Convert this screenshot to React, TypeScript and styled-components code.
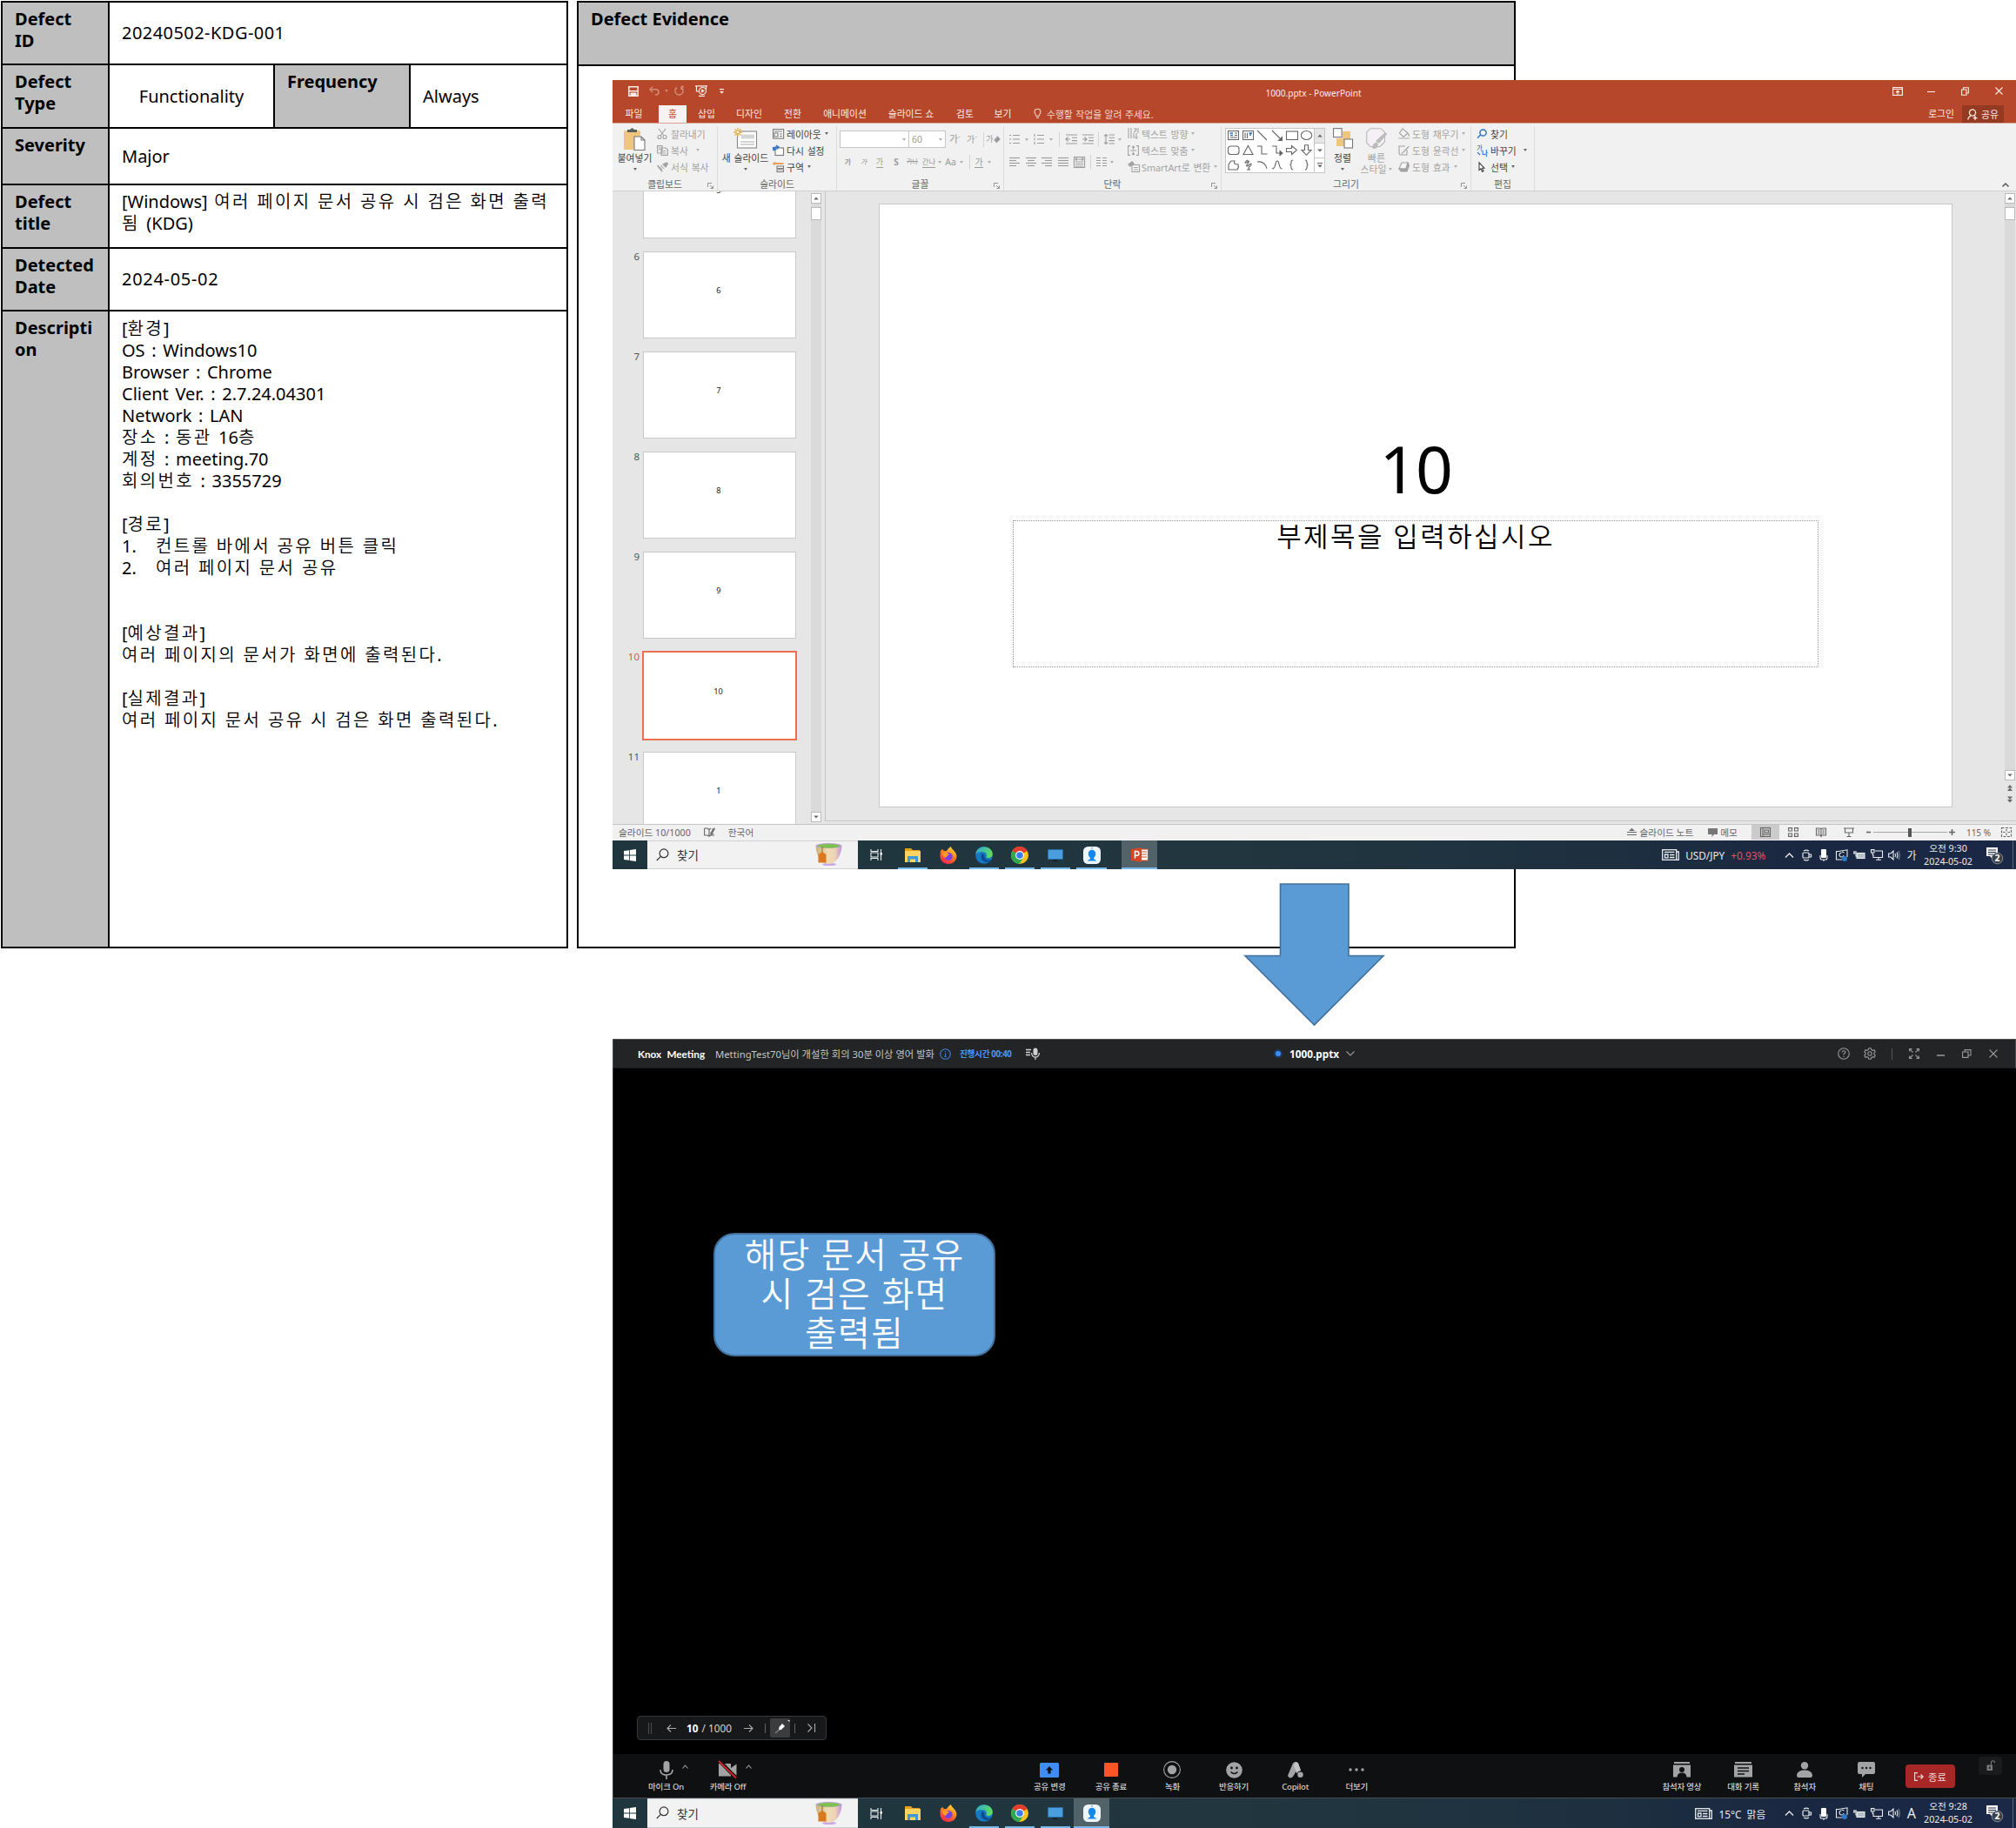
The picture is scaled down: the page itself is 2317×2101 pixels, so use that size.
import React from "react";
import styled, { createGlobalStyle, css } from "styled-components";

const Global = createGlobalStyle`
  * { box-sizing: border-box; }
  html, body { margin: 0; padding: 0; background: #fff; }
  body { font-family: "Noto Sans", "Noto Sans CJK KR", sans-serif; }
`;

/* ---------- shared pieces ---------- */

const Page = styled.div`
  position: relative;
  width: 2317px;
  height: 2101px;
  overflow: hidden;
  background: #fff;
  color: #000;
`;

const Svg = styled.svg<{ $w: number; $h: number }>`
  display: block;
  flex: none;
  width: ${(p) => p.$w}px;
  height: ${(p) => p.$h}px;
  overflow: visible;
`;

type IconProps = { w: number; h: number; children: React.ReactNode; stroke?: string; fill?: string; sw?: number };
const Icon = ({ w, h, children, stroke = "currentColor", fill = "none", sw = 1.1 }: IconProps) => (
  <Svg $w={w} $h={h} viewBox={`0 0 ${w} ${h}`} stroke={stroke} fill={fill} strokeWidth={sw}>
    {children}
  </Svg>
);

const Spot = styled.div<{ $w: number; $c?: string; $bg?: string }>`
  flex: none;
  width: ${(p) => p.$w}px;
  align-self: stretch;
  display: flex;
  align-items: center;
  justify-content: center;
  color: ${(p) => p.$c || "inherit"};
  background: ${(p) => p.$bg || "transparent"};
`;

const Gap = styled.div<{ $w: number }>`
  flex: none;
  width: ${(p) => p.$w}px;
`;

const Caret = styled.i<{ $c?: string }>`
  flex: none;
  width: 0;
  height: 0;
  border: 2.6px solid transparent;
  border-bottom: 0;
  border-top: 3px solid ${(p) => p.$c || "#666"};
`;

const Hangul = styled.span<{ $ls: number }>`
  letter-spacing: ${(p) => p.$ls}px;
  word-spacing: 0;
  font-weight: 350;
`;

/* Latin keeps its natural width, Hangul runs are spaced a little wider. */
const Mixed = ({ text, ls = 2.35 }: { text: string; ls?: number }) => (
  <>
    {text.split(/([가-힣][가-힣 ]*)/).map((part, i) =>
      i % 2 ? (
        <Hangul key={i} $ls={ls}>
          {part}
        </Hangul>
      ) : (
        part
      )
    )}
  </>
);

/* ---------- report tables ---------- */

const Tables = styled.div`
  display: flex;
  gap: 10px;
  padding: 1px 0 0 1px;
  font-size: 20px;
  line-height: 25px;
`;

const DefectTable = styled.div`
  display: grid;
  grid-template-columns: 121px 188px 154px 179px;
  grid-template-rows: 70px 71px 63px 71px 70px 730px;
  gap: 2px;
  padding: 2px;
  background: #000;
`;

const EvidenceTable = styled.div`
  display: grid;
  grid-template-columns: 1075px;
  grid-template-rows: 71px 1012px;
  gap: 2px;
  padding: 2px;
  background: #000;
`;

const HeadCell = styled.div`
  background: #bfbfbf;
  font-weight: 700;
  padding: 6px 0 0 14px;
`;

const Cell = styled.div<{ $span?: number; $top?: number; $center?: boolean; $ls?: number }>`
  background: #fff;
  grid-column: span ${(p) => p.$span || 1};
  display: flex;
  flex-direction: column;
  justify-content: ${(p) => (p.$top ? "flex-start" : "center")};
  align-items: ${(p) => (p.$center ? "center" : "flex-start")};
  padding: ${(p) => (p.$center ? "0" : p.$top ? `${p.$top}px 0 0 14px` : "0 0 1px 14px")};
  letter-spacing: ${(p) => p.$ls || 0}px;
`;

const Line = styled.div`
  height: 25px;
  white-space: pre;
  display: flex;
  word-spacing: 2.4px;
`;

const Bullet = styled.span`
  width: 39px;
`;

const env = [
  "[환경]", "OS : Windows10", "Browser : Chrome", "Client Ver. : 2.7.24.04301", "Network : LAN",
  "장소 : 동관 16층", "계정 : meeting.70", "회의번호 : 3355729", "", "[경로]",
];
const results = ["", "", "[예상결과]", "여러 페이지의 문서가 화면에 출력된다.", "", "[실제결과]", "여러 페이지 문서 공유 시 검은 화면 출력된다."];

const TextLine = ({ text }: { text: string }) => (
  <Line>
    <span>
      <Mixed text={text} />
    </span>
  </Line>
);

const Report = () => (
  <Tables>
    <DefectTable>
      <HeadCell>Defect<br />ID</HeadCell>
      <Cell $span={3} $ls={0.45}>20240502-KDG-001</Cell>
      <HeadCell>Defect<br />Type</HeadCell>
      <Cell $center>Functionality</Cell>
      <HeadCell>Frequency</HeadCell>
      <Cell>Always</Cell>
      <HeadCell>Severity</HeadCell>
      <Cell $span={3}>Major</Cell>
      <HeadCell>Defect<br />title</HeadCell>
      <Cell $span={3} $top={6}>
        <TextLine text="[Windows] 여러 페이지 문서 공유 시 검은 화면 출력" />
        <TextLine text="됨 (KDG)" />
      </Cell>
      <HeadCell>Detected<br />Date</HeadCell>
      <Cell $span={3} $ls={0.7}>2024-05-02</Cell>
      <HeadCell>Descripti<br />on</HeadCell>
      <Cell $span={3} $top={7}>
        {env.map((t, i) => <TextLine key={i} text={t} />)}
        <Line><Bullet>1.</Bullet><Hangul $ls={2.35}>컨트롤 바에서 공유 버튼 클릭</Hangul></Line>
        <Line><Bullet>2.</Bullet><Hangul $ls={2.35}>여러 페이지 문서 공유</Hangul></Line>
        {results.map((t, i) => <TextLine key={i} text={t} />)}
      </Cell>
    </DefectTable>
    <EvidenceTable>
      <HeadCell>Defect Evidence</HeadCell>
      <Cell />
    </EvidenceTable>
  </Tables>
);

/* ---------- windows placed on the sheet ---------- */

const Capture = styled.section<{ $y: number }>`
  position: absolute;
  left: 704px;
  top: ${(p) => p.$y}px;
  width: 1613px;
  height: 907px;
  overflow: hidden;
  display: flex;
  flex-direction: column;
  white-space: nowrap;
`;

/* ---------- Windows taskbar ---------- */

const Bar = styled.div`
  flex: 1;
  display: flex;
  background: linear-gradient(90deg, #20363f 0%, #21363f 45%, #1e3040 70%, #1a2741 85%, #1b2846 100%);
  color: #e8ecee;
`;

const SearchBox = styled.div`
  width: 242px;
  background: #f2f2f2;
  border: 1px solid #cfd2d4;
  border-width: 1px 0;
  display: flex;
  align-items: center;
  padding: 0 18px 1px 10px;
  color: #333;
  font-size: 13.5px;
  gap: 9px;
`;

const Grow = styled.div`
  flex: 1;
`;

const Task = styled.div<{ $line?: boolean; $on?: boolean }>`
  width: 41.2px;
  height: 100%;
  display: flex;
  align-items: center;
  justify-content: center;
  position: relative;
  background: ${(p) => (p.$on ? "rgba(255,255,255,.22)" : "transparent")};
  ${(p) =>
    (p.$line || p.$on) &&
    css`
      &::after {
        content: "";
        position: absolute;
        left: ${p.$on ? 0 : 3.5}px;
        right: ${p.$on ? 0 : 3.5}px;
        bottom: 0;
        height: 2px;
        background: #76b9ed;
      }
    `}
`;

const News = styled.div`
  display: flex;
  align-items: center;
  gap: 7px;
  margin-right: 17px;
  font-size: 11.8px;
`;

const Down = styled.span`
  color: #e0525c;
`;

const Clock = styled.div`
  width: 64px;
  display: flex;
  flex-direction: column;
  justify-content: center;
  align-items: center;
  font-size: 10.7px;
  line-height: 15px;
`;

const Edge = styled.div`
  width: 1px;
  margin-right: 3px;
  background: #5b6577;
`;

const WinLogo = () => (
  <Icon w={14} h={14} stroke="none" fill="#fff">
    <path d="M0 2 L6 1.2 V6.6 H0Z M6.8 1.1 L14 0 V6.6 H6.8Z M0 7.4 H6 V12.8 L0 12Z M6.8 7.4 H14 V14 L6.8 12.9Z" />
  </Icon>
);

const TeaCup = () => (
  <Icon w={31} h={26} stroke="none">
    <defs>
      <linearGradient id="cup" x1="0" y1="0" x2="1" y2="0">
        <stop offset="0" stopColor="#c9b07e" />
        <stop offset=".45" stopColor="#f0dcb4" />
        <stop offset=".75" stopColor="#ecd3b4" />
        <stop offset="1" stopColor="#c08fe0" />
      </linearGradient>
    </defs>
    <ellipse cx="16" cy="24.500" rx="8" ry="1.600" fill="#c9a7e8" />
    <path d="M.5 3 C1 14 6 24 15.500 24 C24 24 30 14 30.500 3Z" fill="url(#cup)" />
    <ellipse cx="15.500" cy="3" rx="15" ry="3" fill="#b9a2cf" />
    <ellipse cx="15.500" cy="3.300" rx="12.500" ry="2.300" fill="#7cc34d" />
    <path d="M8 4 V12" stroke="#9b6b2f" />
    <path d="M3.500 13 L8 10 L12.500 13 V22.500 H3.500Z" fill="#d9781f" />
  </Icon>
);

const Folder = () => (
  <Icon w={18} h={16} stroke="none">
    <path d="M0 0 H7 L9 2 H17 V4 H0Z" fill="#e2a21c" />
    <rect y="3" width="18" height="13" fill="#fbd363" />
    <path d="M3 16 V9 H15 V16 H12 V12.500 H6 V16Z" fill="#3f97d8" />
  </Icon>
);

const Firefox = () => (
  <Icon w={20} h={20} stroke="none">
    <defs>
      <linearGradient id="ff" x1="0.8" y1="0" x2="0.3" y2="1">
        <stop offset="0" stopColor="#ffe040" />
        <stop offset=".5" stopColor="#ff7a1f" />
        <stop offset="1" stopColor="#f0234f" />
      </linearGradient>
    </defs>
    <path d="M1 5 L3 3 L5 5 L8 5 C9 3 11 1 13 0 C13 3 19 5 19.500 11 C19.500 16 15.500 20 10 20 C4 20 .5 16 .5 11 C.5 8 .8 7 1 5Z" fill="url(#ff)" />
    <circle cx="10" cy="11.500" r="4.600" fill="#7a3fe0" />
    <path d="M3 7 C6 6 9 7 11 9 C9 10 8 11 7 13 C4 12 3 10 3 7Z" fill="#ff9a2b" />
  </Icon>
);

const EdgeLogo = () => (
  <Icon w={20} h={20} stroke="none">
    <defs>
      <linearGradient id="eg" x1="0" y1="0" x2="1" y2="0.4">
        <stop offset="0" stopColor="#2aa7dd" />
        <stop offset="1" stopColor="#5edb5f" />
      </linearGradient>
    </defs>
    <circle cx="10" cy="10" r="9.800" fill="#1579c4" />
    <path d="M.3 9 C1 3.500 5 .2 10 .2 C16 .2 19.800 4.500 19.800 8.500 C19.800 11.500 17.500 13 15 13 C12.500 13 12 12 12.800 11 C13.500 9 12 6 8 6 C4 6 1.500 7 .3 9Z" fill="url(#eg)" />
    <path d="M8 8 C5.500 10 6 17 12.500 18 C15 18.300 17 17 18.500 15 C14 17 9.500 14 10.500 10Z" fill="#0c4c92" />
  </Icon>
);

const Chrome = () => (
  <Icon w={20} h={20} stroke="none">
    <circle cx="10" cy="10" r="10" fill="#fcc31e" />
    <path d="M10 10 L1.340 5 A10 10 0 0 1 18.660 5Z" fill="#e33b2e" />
    <path d="M10 10 L1.340 5 A10 10 0 0 0 9.500 20 L14.300 12.500Z" fill="#2da94f" />
    <circle cx="10" cy="10" r="4.900" fill="#fff" />
    <circle cx="10" cy="10" r="3.800" fill="#3b7ded" />
  </Icon>
);

const Monitor = () => (
  <Icon w={18} h={14} stroke="none">
    <rect width="18" height="12" rx=".6" fill="#1d5f94" />
    <rect x=".8" y=".8" width="16.400" height="10.400" fill="#4a9edd" />
    <path d="M6 14 H12 V13 H10 V12 H8 V13 H6Z" fill="#10222f" />
  </Icon>
);

const Person = () => (
  <Icon w={20} h={20} stroke="none">
    <rect width="20" height="20" rx="5.500" fill="#eef5fb" />
    <circle cx="10" cy="1.800" r=".8" fill="#6a7f90" />
    <ellipse cx="10" cy="8.500" rx="4.200" ry="4.800" fill="#1288f0" />
    <path d="M8 11 H12 V14 L15.500 16.500 H4.500 L8 14Z" fill="#1288f0" />
  </Icon>
);

const PptLogo = () => (
  <Icon w={20} h={17} stroke="none">
    <rect x="9" y="2" width="10.500" height="13" fill="#fff" stroke="#d24726" />
    <path d="M12 5 H18 M12 8 H18 M12 11 H18" stroke="#d24726" />
    <path d="M0 2 L12 0 V17 L0 15Z" fill="#d24726" />
    <path d="M4.500 12.500 V4.500 H6.500 A2.200 2.200 0 0 1 6.500 9.300 H4.500" stroke="#fff" strokeWidth="1.500" fill="none" />
  </Icon>
);

const Ime = styled.span<{ $latin: boolean }>`
  font-size: ${(p) => (p.$latin ? 16 : 12)}px;
`;

const Tray = ({ ime, time }: { ime: string; time: string }) => (
  <>
    <Spot $w={20.1}><Icon w={11} h={6} sw={1.3}><path d="M1 5.500 L5.500 1 L10 5.500" /></Icon></Spot>
    <Spot $w={20.1}>
      <Icon w={11} h={14} sw={1.2}><rect x="1" y="4" width="7" height="6" rx="1" /><path d="M8 6 H10.500 V9 H8 M2 2 Q5 .3 8 2 M2 12 Q5 13.700 8 12" /></Icon>
    </Spot>
    <Spot $w={20.1}>
      <Icon w={10} h={15} sw={1.1}><rect x="2" y="1" width="6" height="10" rx="1" fill="#fff" stroke="none" /><path d="M1 8 V11 Q1 13 3 13 H7 Q9 13 9 11 V8 M5 13 V15" /></Icon>
    </Spot>
    <Spot $w={20.1}>
      <Icon w={15} h={14}><path d="M4 2.500 L14 .8 V9 M4 2.500 H1.500 V12 H8" /><path d="M7.500 4 A2.500 2.500 0 1 0 10 7 M8 3 L10.500 4" /><circle cx="11" cy="11" r="3" fill="#2b79c8" stroke="none" /></Icon>
    </Spot>
    <Spot $w={20.1}>
      <Icon w={14} h={11}><rect x="4" y="3.500" width="9" height="6" fill="#b7c0c6" /><path d="M0 3 H3 V7 H6 M1 1 V5 M3 1 V5" /></Icon>
    </Spot>
    <Spot $w={20.1}>
      <Icon w={14} h={13}><path d="M5 2 H13.500 V9.500 H3 V6 M9 9.500 V12 M6 12.300 H12 M.5 .6 H4 V4 H.5Z M2.200 4 V7" /></Icon>
    </Spot>
    <Spot $w={20.1}>
      <Icon w={14} h={12}><path d="M.6 4 H3 L6 1 V11 L3 8 H.6Z M8 4 Q9.200 6 8 8 M10 2.500 Q12 6 10 9.500" /><path d="M12 1 Q14.500 6 12 11" opacity=".5" /></Icon>
    </Spot>
    <Spot $w={20.1}><Ime $latin={ime === "A"}>{ime}</Ime></Spot>
    <Clock>
      <span>오전 {time}</span>
      <span>2024-05-02</span>
    </Clock>
    <Spot $w={42}>
      <Icon w={18} h={20} stroke="none">
        <path d="M0 1 H13 V11 H7 V14 L4 11 H0Z" fill="#fff" />
        <path d="M2 4 H11 M2 6.500 H11 M2 9 H8" stroke="#1b2846" />
        <circle cx="12.500" cy="13.500" r="6.300" fill="#3a4048" stroke="#9aa0a8" strokeWidth=".8" />
        <text x="12.500" y="17.300" textAnchor="middle" fontSize="10.500" fontWeight="700" fill="#fff">2</text>
      </Icon>
    </Spot>
    <Edge />
  </>
);

const NewsIcon = () => (
  <Icon w={20} h={13} sw={1.3}>
    <rect x=".7" y=".7" width="16" height="11.600" />
    <path d="M17 3 H19.300 V12.300 H16 M3 3.300 H14.500 M3.500 6 H7 V9.800 H3.500Z M9 6.500 H14.500 M9 9.500 H14.500" />
  </Icon>
);

const Taskbar = ({ ppt, ime, time, children }: { ppt?: boolean; ime: string; time: string; children: React.ReactNode }) => (
  <Bar>
    <Spot $w={40}><WinLogo /></Spot>
    <SearchBox>
      <Icon w={15} h={15} sw={1.2}><circle cx="9" cy="5.800" r="4.900" /><path d="M5.400 9.300 L.8 14" /></Icon>
      <span>찾기</span>
      <Grow />
      <TeaCup />
    </SearchBox>
    <Spot $w={42}>
      <Icon w={15} h={13}><path d="M1 0 V2.500 H9 V0 M1 13 V10.500 H9 V13 M1 4 H9 V9 H1Z M12.500 0 V13" /><rect x="11.500" y="4" width="2.500" height="2.500" fill="#fff" stroke="none" /></Icon>
    </Spot>
    <Task $line={ppt}><Folder /></Task>
    <Task><Firefox /></Task>
    <Task $line><EdgeLogo /></Task>
    <Task $line><Chrome /></Task>
    <Task $line><Monitor /></Task>
    <Task $line={ppt} $on={!ppt}><Person /></Task>
    {ppt && <Gap $w={14} />}
    {ppt && <Task $on><PptLogo /></Task>}
    <Grow />
    <News>
      <NewsIcon />
      {children}
    </News>
    <Tray ime={ime} time={time} />
  </Bar>
);

/* ---------- PowerPoint ---------- */

const TitleBar = styled.div`
  height: 29px;
  display: grid;
  grid-template-columns: 1fr auto 1fr;
  background: #b7472a;
  color: #fbeae5;
  font-size: 10.1px;
  align-items: center;
`;

const WindowTitle = styled.span`
  margin-right: 2px;
`;

const Side = styled.div<{ $end?: boolean }>`
  height: 25px;
  align-self: start;
  display: flex;
  align-items: center;
  justify-content: ${(p) => (p.$end ? "flex-end" : "flex-start")};
`;

const TabRow = styled.div`
  height: 20px;
  display: flex;
  background: #b7472a;
  color: #fbeae5;
  font-size: 10.8px;
  line-height: 19px;
`;

const Tab = styled.div<{ $w: number; $on?: boolean }>`
  width: ${(p) => p.$w}px;
  text-align: center;
  background: ${(p) => (p.$on ? "#f6f3f2" : "transparent")};
  color: ${(p) => (p.$on ? "#c9492c" : "inherit")};
`;

const Hint = styled.div`
  display: flex;
  align-items: center;
  gap: 6px;
  margin-left: 14px;
  color: #f2d5cc;
  word-spacing: 0.7px;
`;

const Share = styled.div`
  width: 48px;
  margin: 0 14px 0 9px;
  background: #943a22;
  display: flex;
  align-items: center;
  justify-content: center;
  gap: 4px;
`;

const Rule = styled.div<{ $c: string }>`
  height: 1px;
  flex: none;
  background: ${(p) => p.$c};
`;

const Ribbon = styled.div`
  height: 77px;
  display: flex;
  background: #f1f1f1;
  font-size: 10.8px;
  word-spacing: 1px;
  color: #444;
`;

const Group = styled.div<{ $w: number }>`
  width: ${(p) => p.$w}px;
  position: relative;
  display: flex;
  flex-direction: column;
  border-right: 1px solid #dcdcdc;
  margin: 3px 0 0;
`;

const GroupBody = styled.div`
  height: 60px;
  display: flex;
`;

const GroupName = styled.div`
  height: 14px;
  line-height: 14px;
  text-align: center;
  color: #666;
  display: flex;
  align-items: center;
  justify-content: center;
`;

const Launcher = styled.div`
  position: absolute;
  right: 4px;
  bottom: 2px;
  color: #888;
`;

const Big = styled.div<{ $w: number; $dim?: boolean }>`
  width: ${(p) => p.$w}px;
  display: flex;
  flex-direction: column;
  align-items: center;
  padding-top: 2px;
  color: ${(p) => (p.$dim ? "#a3a3a3" : "#444")};
`;

const BigIcon = styled.div`
  height: 28px;
`;

const BigText = styled.div`
  line-height: 13px;
  height: 13px;
  display: flex;
  align-items: center;
  gap: 3px;
`;

const Stack = styled.div<{ $dim?: boolean }>`
  display: flex;
  flex-direction: column;
  margin-top: -1px;
  color: ${(p) => (p.$dim ? "#a3a3a3" : "#444")};
`;

const Small = styled.div<{ $gap?: number }>`
  height: 19px;
  display: flex;
  align-items: center;
  > span { margin-right: ${(p) => p.$gap ?? 4}px; }
`;

const SmallIcon = styled.div`
  width: 16px;
  display: flex;
  align-items: center;
`;

const Tools = styled.div<{ $top: number; $h: number }>`
  height: ${(p) => p.$h}px;
  margin-top: ${(p) => p.$top}px;
  display: flex;
  align-items: center;
  color: #9b9b9b;
`;

const Column = styled.div<{ $w: number }>`
  width: ${(p) => p.$w}px;
  flex: none;
`;

const Combo = styled.div<{ $w: number }>`
  width: ${(p) => p.$w}px;
  height: 20px;
  margin-right: -1px;
  border: 1px solid #c6c6c6;
  background: #fff;
  display: flex;
  align-items: center;
  justify-content: space-between;
  padding: 0 3px;
  font-size: 10.5px;
`;

const Divider = styled.div<{ $h?: number }>`
  width: 1px;
  height: ${(p) => p.$h || 17}px;
  background: #d4d4d4;
`;

const Glyph = styled.span<{ $u?: boolean; $b?: boolean; $i?: boolean; $s?: boolean; $size?: number }>`
  font-size: ${(p) => p.$size || 9}px;
  line-height: 12px;
  font-weight: ${(p) => (p.$b ? 700 : 400)};
  font-style: ${(p) => (p.$i ? "italic" : "normal")};
  border-bottom: ${(p) => (p.$u ? "1px solid currentColor" : "0")};
  text-decoration: ${(p) => (p.$s ? "line-through" : "none")};
`;

const Gallery = styled.div`
  width: 115px;
  height: 52px;
  margin: 1.500px 0 0 4px;
  border: 1px solid #c6c6c6;
  background: #fff;
  display: flex;
`;

const Shapes = styled.div`
  width: 101px;
  display: grid;
  grid-template-columns: repeat(6, 16.8px);
  grid-template-rows: repeat(3, 16.8px);
  align-items: center;
  justify-items: center;
  color: #666;
`;

const GalleryScroll = styled.div`
  flex: 1;
  display: grid;
  grid-template-rows: 1fr 1fr 1fr;
  border-left: 1px solid #c6c6c6;
  > div { display: flex; align-items: center; justify-content: center; }
  > div + div { border-top: 1px solid #c6c6c6; }
  > div:first-child { background: #e6e6e6; }
`;

const Work = styled.div`
  height: 727px;
  display: flex;
  background: #e6e6e6;
`;

const Thumbs = styled.div`
  width: 228px;
  overflow: hidden;
  height: 727px;
`;

const ThumbList = styled.div`
  margin-top: -46px;
`;

const ThumbRow = styled.div<{ $on?: boolean }>`
  height: 115px;
  display: flex;
  align-items: flex-start;
  color: ${(p) => (p.$on ? "#e0583a" : "#555")};
  font-size: 11.5px;
  line-height: 11px;
`;

const ThumbNo = styled.div`
  width: 31px;
  margin-right: 4px;
  text-align: right;
`;

const Thumb = styled.div<{ $on?: boolean }>`
  width: ${(p) => (p.$on ? 178 : 176)}px;
  height: ${(p) => (p.$on ? 103 : 100)}px;
  margin: ${(p) => (p.$on ? "-1px 0 0 -1.500px" : "0")};
  border: ${(p) => (p.$on ? "2px solid #ec6f4f" : "1px solid #c9c9c9")};
  background: #fff;
  color: #222;
  font-size: 9.2px;
  line-height: 12px;
  display: flex;
  align-items: center;
  justify-content: center;
  padding: 0 2px 10px 0;
`;

const ScrollTrack = styled.div<{ $h: number }>`
  width: 12px;
  height: ${(p) => p.$h}px;
  margin-top: 2px;
  display: flex;
  flex-direction: column;
  background: #dadada;
`;

const ScrollButton = styled.div`
  height: 12px;
  flex: none;
  background: #fff;
  border: 1px solid #bcbcbc;
  display: flex;
  align-items: center;
  justify-content: center;
`;

const ScrollThumb = styled.div`
  height: 15px;
  margin-top: 4px;
  background: #fff;
  border: 1px solid #bcbcbc;
`;

const Main = styled.div`
  flex: 1;
  height: 724px;
  border-left: 1px solid #c4c4c4;
  border-bottom: 1px solid #c8c8c8;
  display: flex;
  justify-content: space-between;
  padding: 0 1px 0 61px;
`;

const Slide = styled.div`
  width: 1234px;
  height: 694px;
  margin-top: 14px;
  background: #fff;
  border: 1px solid #c8c8c8;
  display: flex;
  flex-direction: column;
  align-items: center;
`;

const SlideTitle = styled.div`
  margin-top: 265px;
  font-size: 75px;
  line-height: 76px;
  letter-spacing: -1.500px;
`;

const SlideSubtitle = styled.div`
  margin-top: 22px;
  width: 926px;
  height: 169px;
  border: 1px dotted #8f8f8f;
  text-align: center;
  font-size: 31px;
  line-height: 35px;
  letter-spacing: 2.4px;
  font-weight: 350;
`;

const ScrollSide = styled.div`
  display: flex;
  flex-direction: column;
  align-items: center;
  gap: 5px;
  color: #666;
`;

const Status = styled.div`
  height: 18px;
  display: flex;
  align-items: center;
  background: #f1f1f1;
  color: #666;
  font-size: 10.700px;
  line-height: 16px;
  padding: 0 0 1px 7px;
`;

const Percent = styled.span`
  font-size: 10px;
`;

const ZoomLine = styled.div`
  width: 85px;
  height: 1px;
  background: #a8a8a8;
  display: flex;
  align-items: center;
  justify-content: center;
`;

const ZoomKnob = styled.div`
  width: 4px;
  height: 10px;
  background: #555;
`;

const CollapseMark = styled.div`
  margin-top: 68px;
  color: #555;
`;

const UpArrow = () => <Icon w={6} h={4} stroke="none" fill="#666"><path d="M3 .5 L5.800 3.500 H.2Z" /></Icon>;
const DownArrow = () => <Icon w={6} h={4} stroke="none" fill="#666"><path d="M3 3.500 L5.800 .5 H.2Z" /></Icon>;

const LauncherMark = () => (
  <Launcher>
    <Icon w={7} h={7} sw={0.9}><path d="M.5 5 V.5 H5 M3 3 L6.500 6.500 M6.500 3.500 V6.500 H3.500" /></Icon>
  </Launcher>
);

const Row = ({ icon, text, caret, gap }: { icon: React.ReactNode; text: string; caret?: string; gap?: number }) => (
  <Small $gap={gap}>
    <SmallIcon>{icon}</SmallIcon>
    <span>{text}</span>
    {caret && <Caret $c={caret} />}
  </Small>
);

const Lines = ({ w, rows }: { w: number; rows: number[][] }) => (
  <Icon w={w} h={12}>
    {rows.map(([a, b], i) => <path key={i} d={`M${a} ${1.5 + i * 3} H${b}`} />)}
  </Icon>
);

const shapeIcons: React.ReactNode[] = [
  <><rect x=".5" y="1.500" width="12" height="10" /><path d="M2.500 4 H6 M3 6.500 H6" stroke="#2f74c0" strokeWidth="1.500" /><path d="M8 4 H11 M8 6.500 H11 M2.500 9 H11" /></>,
  <><rect x=".5" y="1.500" width="12" height="10" /><path d="M3 3.500 V10 M5.500 3.500 V10" /><path d="M7.500 4 H11 M9 4 V7" stroke="#2f74c0" strokeWidth="1.500" /></>,
  <path d="M1 1 L12 12" />,
  <><path d="M1 1 L12 12" /><path d="M12.500 8.500 V12.500 H8.500Z" fill="currentColor" /></>,
  <rect x=".5" y="2" width="13" height="9.500" />,
  <ellipse cx="6.500" cy="6.500" rx="6.200" ry="5" />,
  <rect x=".5" y="2" width="12.500" height="9.500" rx="3" />,
  <path d="M6.500 1.500 L12 11.500 H1Z" />,
  <path d="M1 2 H6 V11 H12.500" />,
  <><path d="M1 2 H6 V10 H11" /><path d="M10 7.500 L13 10 L10 12.500Z" fill="currentColor" /></>,
  <path d="M.5 4.500 H6.500 V1.500 L12.500 6.500 L6.500 11.500 V8.500 H.5Z" />,
  <path d="M4.500 .8 H8.500 V6.500 H12 L6.500 12.300 L1 6.500 H4.500Z" />,
  <path d="M1 12 V6 L4 2 H8 Q6 6 12 6 Q13 10 11 12Z" />,
  <path d="M6 1 C1 4 3 6 7 2 C9 2 3 8 5 8 C7 8 10 3 10 6 C10 8 5 9 8 12 M5 12 H9" />,
  <path d="M1 3 Q10 2 12 11" />,
  <path d="M1 11 C6 11 4 2 7 2 C10 2 8 11 12.500 11" />,
  <path d="M8 1 Q6 1 6 3.500 Q6 6.500 4.500 6.500 Q6 6.500 6 9.500 Q6 12 8 12" />,
  <path d="M5 1 Q7 1 7 3.500 Q7 6.500 8.500 6.500 Q7 6.500 7 9.500 Q7 12 5 12" />,
];

const PowerPoint = () => (
  <Capture $y={92}>
    <TitleBar>
      <Side>
        <Gap $w={12} />
        <Spot $w={24}><Icon w={12} h={12} sw={1.5}><path d="M.8 .8 H11.200 V11.200 H.8Z" /><path d="M1 5.700 H11" /><path d="M3 8 H9 V11 H3Z" fill="currentColor" strokeWidth="1" /></Icon></Spot>
        <Spot $w={24} $c="#d48a76"><Icon w={12} h={11} sw={1.5}><path d="M4 .8 L1 3.800 L4 7 M1 3.800 H8 Q11 4 11 7 Q11 10 7 10" /></Icon></Spot>
        <Caret $c="#d48a76" />
        <Gap $w={1} />
        <Spot $w={22} $c="#d48a76"><Icon w={11} h={11} sw={1.5}><path d="M3 1.500 A4.600 4.600 0 1 0 8 1.500 M8 .5 H11 M8 .5 V4" /></Icon></Spot>
        <Spot $w={30}><Icon w={14} h={13} sw={1.2}><path d="M0 .8 H14 M1.500 1 V7 H5 M12.500 1 V5 M4 12.300 H11" /><circle cx="8.500" cy="6.500" r="4" /><path d="M7.300 4.600 V8.400 L10.500 6.500Z" fill="currentColor" strokeWidth=".5" /></Icon></Spot>
        <Spot $w={16}><Icon w={5} h={6} stroke="none" fill="currentColor"><path d="M0 0 H5 V1.200 H0Z M0 3 H5 L2.500 5.800Z" /></Icon></Spot>
      </Side>
      <WindowTitle>1000.pptx - PowerPoint</WindowTitle>
      <Side $end>
        <Spot $w={39}><Icon w={12} h={10} sw={1.2}><rect x=".6" y=".6" width="10.800" height="8.800" /><path d="M1 2.500 H11 M6 8.500 V4.500 M4 6.200 L6 4.300 L8 6.200" /></Icon></Spot>
        <Spot $w={39}><Icon w={9} h={2}><path d="M0 1.500 H9" /></Icon></Spot>
        <Spot $w={39}><Icon w={9} h={10}><path d="M.6 3 H6 V9.200 H.6Z M2.500 3 V.8 H8.400 V7 H6" /></Icon></Spot>
        <Spot $w={39}><Icon w={9} h={9}><path d="M.5 .5 L8.500 8.500 M8.500 .5 L.5 8.500" /></Icon></Spot>
      </Side>
    </TitleBar>
    <TabRow>
      <Tab $w={49}>파일</Tab>
      <Gap $w={4} />
      <Tab $w={32} $on>홈</Tab>
      <Tab $w={46}>삽입</Tab>
      <Tab $w={52}>디자인</Tab>
      <Tab $w={48}>전환</Tab>
      <Tab $w={72}>애니메이션</Tab>
      <Tab $w={80}>슬라이드 쇼</Tab>
      <Tab $w={44}>검토</Tab>
      <Tab $w={43}>보기</Tab>
      <Hint>
        <Icon w={9} h={12}><path d="M3 8.500 C3 6.500 1 6 1 3.800 A3.500 3.500 0 0 1 8 3.800 C8 6 6 6.500 6 8.500Z M3 10.500 H6" /></Icon>
        <span>수행할 작업을 알려 주세요.</span>
      </Hint>
      <Grow />
      <span>로그인</span>
      <Share>
        <Icon w={12} h={13} sw={1.3}><circle cx="6" cy="4.500" r="3.600" /><path d="M.8 12.500 Q1 9.500 4 8 M8 7.700 L9 9 M9 8.500 V13 M6.700 10.700 H11.500" /></Icon>
        <span>공유</span>
      </Share>
    </TabRow>
    <Rule $c="#d9a396" />
    <Ribbon>
      <Group $w={121}>
        <GroupBody>
          <Big $w={51}>
            <BigIcon>
              <Icon w={25} h={26} stroke="none">
                <rect y="3" width="19" height="22" rx="1" fill="#efc67e" />
                <path d="M4 5 V2 H7 Q9.500 -1.500 12 2 H15 V5Z" fill="#5d5d5d" />
                <path d="M12 10 H20 L24 14 V25.500 H12Z M20 10 V14 H24" fill="#fff" stroke="#777" />
              </Icon>
            </BigIcon>
            <BigText>붙여넣기</BigText>
            <BigText><Caret /></BigText>
          </Big>
          <Stack $dim>
            <Row icon={<Icon w={12} h={12}><circle cx="3" cy="9.500" r="2" /><circle cx="9" cy="9.500" r="2" /><path d="M2 0 L8 8 M10 0 L4 8" /></Icon>} text="잘라내기" />
            <Row icon={<Icon w={13} h={12}><path d="M.6 .6 H6 V9 H.6Z M5 3 H10 L12.400 5 V11.400 H5Z M2 3 H4 M2 5 H4 M7 6.500 H10.500 M7 9 H10.500" /></Icon>} text="복사" caret="#b5b5b5" gap={9} />
            <Row icon={<Icon w={13} h={12}><path d="M.5 4 L5 8 L6 11.500 L1 5Z M7 3 L10 6 L12.500 2 L11 .8Z M4.500 4 L8 8" fill="currentColor" /></Icon>} text="서식 복사" />
          </Stack>
        </GroupBody>
        <GroupName>클립보드</GroupName>
        <LauncherMark />
      </Group>
      <Group $w={137}>
        <GroupBody>
          <Big $w={63}>
            <BigIcon>
              <Icon w={27} h={24}>
                <rect x="4.500" y="4" width="22" height="19" fill="#fff" stroke="#888" />
                <rect x="9" y="7.500" width="15" height="5" fill="#d5d5d5" stroke="none" />
                <path d="M8 16 H24 M8 19 H24" stroke="#aaa" />
                <path d="M5 0 V10 M0 5 H10 M1.500 1.500 L8.500 8.500 M8.500 1.500 L1.500 8.500" stroke="#e9ae45" strokeWidth="1.300" />
                <circle cx="5" cy="5" r="2" fill="#fff" stroke="#e9ae45" />
              </Icon>
            </BigIcon>
            <BigText>새 슬라이드</BigText>
            <BigText><Caret /></BigText>
          </Big>
          <Stack>
            <Row icon={<Icon w={13} h={12} stroke="#777"><rect x=".6" y=".6" width="12" height="10.500" fill="#fff" /><path d="M2 3 H11 M2 5 H6 V9 H2Z M8 6 H11 M8 8.500 H11" /></Icon>} text="레이아웃" caret="#666" />
            <Row icon={<Icon w={14} h={12} stroke="#777"><rect x="3" y="3" width="9.500" height="8.500" fill="#fff" /><path d="M1 5 Q1 1.500 6 2 M4 0 L7 2 L4.500 4.500 M.5 2 L1.200 5.500 L4 4" stroke="#2f74c0" strokeWidth="1.500" /></Icon>} text="다시 설정" />
            <Row icon={<Icon w={14} h={12} stroke="#777"><path d="M3 2 H12.500" stroke="#e58d3a" strokeWidth="1.600" /><path d="M0 2 H4 M2 0 V4" stroke="#e58d3a" /><rect x="5" y="5" width="7.500" height="2.500" fill="#fff" /><rect x="5" y="9" width="7.500" height="2.500" fill="#fff" /></Icon>} text="구역" caret="#666" />
          </Stack>
        </GroupBody>
        <GroupName>슬라이드</GroupName>
      </Group>
      <Group $w={192}>
        <Column $w={191}>
          <Tools $top={5} $h={20}>
            <Gap $w={3} />
            <Combo $w={80}><span /><Caret $c="#b0b0b0" /></Combo>
            <Combo $w={43}><span>60</span><Caret $c="#b0b0b0" /></Combo>
            <Gap $w={2} />
            <Spot $w={19}><Glyph $size={11}>가</Glyph><Glyph $size={7}>ˆ</Glyph></Spot>
            <Spot $w={20}><Glyph $size={10}>가</Glyph><Glyph $size={7}>ˇ</Glyph></Spot>
            <Gap $w={3} />
            <Divider />
            <Spot $w={20}><Glyph $size={9}>가</Glyph><Icon w={7} h={8}><path d="M1 5 L4.500 1 L7 4 L3.500 7.500Z" fill="currentColor" /></Icon></Spot>
          </Tools>
          <Tools $top={7} $h={18}>
            <Gap $w={4} />
            <Spot $w={17}><Glyph $b $size={8}>가</Glyph></Spot>
            <Spot $w={19}><Glyph $i $size={8}>가</Glyph></Spot>
            <Spot $w={18}><Glyph $u>가</Glyph></Spot>
            <Spot $w={20}><Glyph $b $size={10}>S</Glyph></Spot>
            <Spot $w={17}><Glyph $s $size={7}>가나</Glyph></Spot>
            <Spot $w={21}><Glyph $u $size={8.5}>간나</Glyph></Spot>
            <Caret $c="#b0b0b0" />
            <Spot $w={21}><Glyph $size={10.5}>Aa</Glyph></Spot>
            <Caret $c="#b0b0b0" />
            <Gap $w={7} />
            <Divider />
            <Spot $w={20}><Glyph $u $size={10}>가</Glyph></Spot>
            <Caret $c="#b0b0b0" />
          </Tools>
        </Column>
        <Grow />
        <GroupName>글꼴</GroupName>
        <LauncherMark />
      </Group>
      <Group $w={250}>
        <GroupBody>
          <Column $w={142}>
            <Tools $top={5} $h={20}>
              <Gap $w={6} />
              <Icon w={12} h={12}><path d="M4 1.500 H12 M4 6 H12 M4 10.500 H12 M0 1.500 H2 M0 6 H2 M0 10.500 H2" /></Icon>
              <Gap $w={6} /><Caret $c="#b0b0b0" />
              <Gap $w={6} />
              <Icon w={12} h={12}><path d="M4 1.500 H12 M4 6 H12 M4 10.500 H12 M1 0 V3 M1 4.500 V7.500 M1 9 V12" /></Icon>
              <Gap $w={6} /><Caret $c="#b0b0b0" />
              <Gap $w={7} /><Divider /><Gap $w={7} />
              <Icon w={13} h={12}><path d="M0 1 H13 M7 4.300 H13 M7 7.600 H13 M0 11 H13 M0 6 H5 M2.500 3.500 L0 6 L2.500 8.500" /></Icon>
              <Gap $w={6} />
              <Icon w={13} h={12}><path d="M0 1 H13 M7 4.300 H13 M7 7.600 H13 M0 11 H13 M0 6 H5 M2.500 3.500 L5 6 L2.500 8.500" /></Icon>
              <Gap $w={5} /><Divider /><Gap $w={6} />
              <Icon w={12} h={12}><path d="M5.500 1 H12 M5.500 4.300 H12 M5.500 7.600 H12 M5.500 11 H12 M2 0 V12 M0 2.500 L2 .5 L4 2.500 M0 9.500 L2 11.500 L4 9.500" /></Icon>
              <Gap $w={4} /><Caret $c="#b0b0b0" />
            </Tools>
            <Tools $top={7} $h={18}>
              <Gap $w={6} />
              <Lines w={12} rows={[[0, 12], [0, 8], [0, 12], [0, 8]]} />
              <Gap $w={7} />
              <Lines w={12} rows={[[0, 12], [2, 10], [0, 12], [2, 10]]} />
              <Gap $w={6} />
              <Lines w={12} rows={[[0, 12], [4, 12], [0, 12], [4, 12]]} />
              <Gap $w={7} />
              <Lines w={12} rows={[[0, 12], [0, 12], [0, 12], [0, 12]]} />
              <Gap $w={6} />
              <Icon w={13} h={13}><rect x=".5" y=".5" width="12" height="12" /><path d="M2 3 H11 M3.500 1.500 L2 3 L3.500 4.500 M9.500 1.500 L11 3 L9.500 4.500 M2 6 H11 M2 8.500 H11 M2 11 H11" /></Icon>
              <Gap $w={6} /><Divider /><Gap $w={6} />
              <Icon w={12} h={12}><path d="M0 1.500 H5 M0 4.500 H5 M0 7.500 H5 M0 10.500 H5 M7 1.500 H12 M7 4.500 H12 M7 7.500 H12 M7 10.500 H12" /></Icon>
              <Gap $w={4} /><Caret $c="#b0b0b0" />
            </Tools>
          </Column>
          <Stack $dim>
            <Row icon={<Icon w={13} h={13}><path d="M1 0 V12 M4 0 V12 M7 6 V12 M10 6 V10 M7 1 H10 Q10 4 7 5 M12 0 V6 M8.500 10 L10 12 L11.500 10" /></Icon>} text="텍스트 방향" caret="#b0b0b0" />
            <Row icon={<Icon w={13} h={12}><path d="M3 .6 H.6 V11.400 H3 M10 .6 H12.400 V11.400 H10 M6.500 1 V5 M5 2.500 L6.500 1 L8 2.500 M6.500 11 V7.500 M5 9.500 L6.500 11 L8 9.500 M3 6 H10" /></Icon>} text="텍스트 맞춤" caret="#b0b0b0" />
            <Row icon={<Icon w={14} h={13}><path d="M0 4 L5 0 L8 3 L3 7Z" fill="currentColor" stroke="none" /><rect x="5" y="4.500" width="8.500" height="8" fill="#f4f4f4" /><path d="M7 7.500 H12 M7 10 H12" /></Icon>} text="SmartArt로 변환" caret="#b0b0b0" />
          </Stack>
        </GroupBody>
        <GroupName>단락</GroupName>
        <LauncherMark />
      </Group>
      <Group $w={287}>
        <GroupBody>
          <Gallery>
            <Shapes>
              {shapeIcons.map((s, i) => <Icon key={i} w={13} h={13}>{s}</Icon>)}
            </Shapes>
            <GalleryScroll>
              <div><UpArrow /></div>
              <div><DownArrow /></div>
              <div><Icon w={6} h={6} stroke="none" fill="#666"><path d="M0 0 H6 V1 H0Z M.2 2.500 H5.800 L3 5.500Z" /></Icon></div>
            </GalleryScroll>
          </Gallery>
          <Gap $w={1} />
          <Big $w={38}>
            <BigIcon>
              <Icon w={23} h={24} stroke="#777">
                <rect x="11" y="4" width="9" height="9" fill="#efc67e" stroke="none" />
                <rect x="4" y="12" width="9" height="9" fill="#efc67e" stroke="none" />
                <rect x=".6" y=".6" width="9.500" height="10" fill="#fff" />
                <rect x="13" y="13" width="9.500" height="10" fill="#fff" />
              </Icon>
            </BigIcon>
            <BigText>정렬</BigText>
            <BigText><Caret /></BigText>
          </Big>
          <Big $w={40} $dim>
            <BigIcon>
              <Icon w={24} h={25} stroke="#b8b8b8">
                <path d="M5 .7 H17 L21.500 5 V16 L16 21.500 H5 L.7 17 V5Z" fill="#f5f0f5" />
                <path d="M23.500 7 L15 17 L12 15 L22 6Z M12 17 Q14 18 12.500 22 Q8 25 7.500 22 Q9 18 12 17Z" fill="#bdbdbd" />
              </Icon>
            </BigIcon>
            <BigText>빠른</BigText>
            <BigText>스타일<Caret $c="#b0b0b0" /></BigText>
          </Big>
          <Gap $w={5} />
          <Stack $dim>
            <Row icon={<Icon w={13} h={13}><path d="M5 .8 L11 6 L6 10.500 L1.500 6Z M11 6 Q13 8 12 10" /><path d="M0 12 H13" stroke="#cfcfcf" strokeWidth="2" /></Icon>} text="도형 채우기" caret="#b0b0b0" />
            <Row icon={<Icon w={13} h={12}><path d="M8 1 H1 V9 L2 11 H10 V5 M12.500 1 L5 8.500 L4 10" /></Icon>} text="도형 윤곽선" caret="#b0b0b0" />
            <Row icon={<Icon w={13} h={12}><path d="M4 1 H11 L9 8 H1Z" fill="#f6f6f6" /><path d="M1 8 L3 11 H10 L12.500 4 L11 1 L9 8Z" fill="currentColor" /></Icon>} text="도형 효과" caret="#b0b0b0" />
          </Stack>
        </GroupBody>
        <GroupName>그리기</GroupName>
        <LauncherMark />
      </Group>
      <Group $w={73}>
        <GroupBody>
          <Gap $w={6} />
          <Stack>
            <Row icon={<Icon w={12} h={11} stroke="#2f74c0" sw={1.5}><circle cx="7.500" cy="4.500" r="3.600" /><path d="M4.800 7 L1 10.500" /></Icon>} text="찾기" />
            <Row icon={<Icon w={14} h={13} stroke="none"><text x="0" y="7" fontSize="7.500" fill="#555">가</text><text x="6" y="13" fontSize="7.500" fontWeight="700" fill="#2f74c0">나</text><path d="M1 9 L4 12" stroke="#2f74c0" /></Icon>} text="바꾸기" caret="#666" gap={8} />
            <Row icon={<Icon w={12} h={12}><path d="M3 .8 V9.500 L5 7.800 L6.500 11.300 L8 10.700 L6.500 7.300 H9Z" fill="#fff" /></Icon>} text="선택" caret="#666" />
          </Stack>
        </GroupBody>
        <GroupName>편집</GroupName>
      </Group>
      <Grow />
      <Column $w={16}>
        <CollapseMark><Icon w={8} h={5} sw={1.5}><path d="M.5 4.500 L4 1 L7.500 4.500" /></Icon></CollapseMark>
      </Column>
    </Ribbon>
    <Rule $c="#cfcfcf" />
    <Work>
      <Thumbs>
        <ThumbList>
          {[5, 6, 7, 8, 9, 10, 11].map((n) => (
            <ThumbRow key={n} $on={n === 10}>
              <ThumbNo>{n > 5 ? n : null}</ThumbNo>
              <Thumb $on={n === 10}>{n === 11 ? 1 : n}</Thumb>
            </ThumbRow>
          ))}
        </ThumbList>
      </Thumbs>
      <ScrollTrack $h={723}>
        <ScrollButton><UpArrow /></ScrollButton>
        <ScrollThumb />
        <Grow />
        <ScrollButton><DownArrow /></ScrollButton>
      </ScrollTrack>
      <Gap $w={4} />
      <Main>
        <Slide>
          <SlideTitle>10</SlideTitle>
          <SlideSubtitle>부제목을 입력하십시오</SlideSubtitle>
        </Slide>
        <ScrollSide>
          <ScrollTrack $h={675}>
            <ScrollButton><UpArrow /></ScrollButton>
            <ScrollThumb />
            <Grow />
            <ScrollButton><DownArrow /></ScrollButton>
          </ScrollTrack>
          <Icon w={6} h={8} stroke="none" fill="#666"><path d="M3 0 L6 3.500 H0Z M3 3.500 L6 7 H0Z" /></Icon>
          <Icon w={6} h={8} stroke="none" fill="#666"><path d="M3 4 L6 .5 H0Z M3 7.500 L6 4 H0Z" /></Icon>
        </ScrollSide>
      </Main>
    </Work>
    <Rule $c="#c4c4c4" />
    <Status>
      <span>슬라이드 10/1000</span>
      <Gap $w={15} />
      <Icon w={13} h={11}><path d="M.6 1 H4 L6 2.500 L8 1 M6 2.500 V10 L4 9 H.6 V1 M6 10 L8 9 M12.500 .5 L8 6 L8 8 L11 7 M9 2 H12 L8 9 H12" /></Icon>
      <Gap $w={15} />
      <span>한국어</span>
      <Grow />
      <Icon w={11} h={9}><path d="M0 4.500 H11 M0 7.500 H11 M3.500 2.500 L5.500 .5 L7.500 2.500Z" /></Icon>
      <Gap $w={3} />
      <span>슬라이드 노트</span>
      <Gap $w={17} />
      <Icon w={11} h={10} stroke="none" fill="#777"><path d="M0 0 H11 V7 H7 L4.500 10 V7 H0Z" /></Icon>
      <Gap $w={3} />
      <span>메모</span>
      <Gap $w={16} />
      <Spot $w={32} $bg="#cbcbcb"><Icon w={12} h={11}><rect x=".5" y=".5" width="11" height="10" /><path d="M3 .5 V10 M5 3 H9.500 V6 H5Z M3 8 H11" /></Icon></Spot>
      <Spot $w={32}><Icon w={12} h={11}><path d="M.6 .6 H4.500 V4 H.6Z M7.500 .6 H11.400 V4 H7.500Z M.6 7 H4.500 V10.400 H.6Z M7.500 7 H11.400 V10.400 H7.500Z" /></Icon></Spot>
      <Spot $w={32}><Icon w={12} h={11}><path d="M.5 1 H5 L6 2 L7 1 H11.500 V9 H7 L6 10.500 L5 9 H.5Z M6 2 V10 M2 3 H4.500 M2 5 H4.500 M2 7 H4.500 M7.500 3 H10 M7.500 5 H10 M7.500 7 H10" /></Icon></Spot>
      <Spot $w={32}><Icon w={12} h={11}><path d="M0 1 H12 M1.500 1 V6 H10.500 V1 M6 6 V10 M3.500 10.500 H8.500" /></Icon></Spot>
      <Gap $w={4} />
      <Icon w={5} h={3} sw={1.6}><path d="M0 1.500 H5" /></Icon>
      <Gap $w={3} />
      <ZoomLine><ZoomKnob /></ZoomLine>
      <Gap $w={2} />
      <Icon w={7} h={7} sw={1.6}><path d="M0 3.500 H7 M3.500 0 V7" /></Icon>
      <Gap $w={13} />
      <Percent>115 %</Percent>
      <Gap $w={12} />
      <Icon w={12} h={11}><rect x=".5" y=".5" width="11" height="10" strokeDasharray="3 1.500" /><path d="M6 2 V4.500 M6 6.500 V9 M2 5.500 H4.500 M7.500 5.500 H10" /></Icon>
      <Gap $w={5} />
    </Status>
    <Taskbar ppt ime="가" time="9:30">
      <span>USD/JPY</span>
      <Down>+0.93%</Down>
    </Taskbar>
  </Capture>
);

/* ---------- Knox Meeting ---------- */

const MeetHead = styled.div`
  height: 34px;
  display: flex;
  align-items: center;
  background: #222426;
  border: 1px solid #4b4d50;
  border-bottom-color: #18191b;
  color: #c3c5c7;
  font-size: 11.3px;
`;

const HeadSide = styled.div<{ $end?: boolean }>`
  flex: 1 1 0;
  height: 100%;
  display: flex;
  align-items: center;
  justify-content: ${(p) => (p.$end ? "flex-end" : "flex-start")};
  color: ${(p) => (p.$end ? "#97999b" : "inherit")};
`;

const Brand = styled.span`
  margin: 0 12px 0 28px;
  width: 77px;
  color: #fff;
  font: 700 11.7px Lato, "Noto Sans", sans-serif;
  word-spacing: 3.5px;
`;

const Elapsed = styled.span`
  margin: 0 16px 0 10px;
  color: #4b97f0;
  font-weight: 700;
  font-size: 9.7px;
  letter-spacing: -0.35px;
`;

const FileName = styled.span`
  color: #fff;
  font-weight: 700;
  font-size: 11.8px;
  margin: 0 8px;
`;

const Stage = styled.div`
  height: 788px;
  background: #000;
  border-left: 1px solid #3c3d3f;
  display: flex;
  align-items: flex-end;
  padding: 0 0 16px 27px;
`;

const Pager = styled.div`
  width: 218px;
  height: 28px;
  border: 1px solid #37383a;
  border-radius: 4px;
  background: #17181a;
  display: flex;
  align-items: center;
  color: #a9abad;
  font-size: 11.8px;
  > b { color: #fff; }
  > span { color: #d5d6d7; margin-left: 4px; }
`;

const Pen = styled.div`
  width: 23px;
  height: 22px;
  border-radius: 2px;
  background: #3b3c3e;
  display: flex;
  align-items: center;
  justify-content: center;
  color: #fff;
`;

const Controls = styled.div`
  height: 51px;
  display: flex;
  background: #0f1011;
  border-left: 1px solid #3c3d3f;
  border-bottom: 1px solid #4a4c4f;
`;

const Control = styled.div<{ $w: number }>`
  width: ${(p) => p.$w}px;
  flex: none;
  display: flex;
  flex-direction: column;
  align-items: center;
  color: #a2a3a5;
`;

const ControlIcon = styled.div`
  height: 30px;
  padding-top: 6px;
  display: flex;
  align-items: center;
  justify-content: center;
  position: relative;
`;

const Chevron = styled.div`
  position: absolute;
  left: 100%;
  top: 12px;
  margin-left: 10px;
`;

const ControlLabel = styled.div`
  font-size: 9.5px;
  line-height: 15px;
  letter-spacing: -0.2px;
  color: #cfd0d2;
  font-weight: 500;
`;

const Leave = styled.div`
  width: 57px;
  height: 27px;
  margin-top: 12px;
  border-radius: 4px;
  background: #a62725;
  color: #f3dada;
  display: flex;
  align-items: center;
  justify-content: center;
  gap: 5px;
  font-size: 11.3px;
`;

const Lock = styled.div`
  width: 27px;
  height: 21px;
  margin: 3px 16px 0 27px;
  border-radius: 3px;
  background: #1a1b1d;
  color: #77797b;
  display: flex;
  align-items: center;
  justify-content: center;
`;

const Up = () => <Icon w={7} h={5}><path d="M.5 4.500 L3.500 1 L6.500 4.500" /></Icon>;

const Action = ({ w = 70.6, label, children, more }: { w?: number; label: string; children: React.ReactNode; more?: boolean }) => (
  <Control $w={w}>
    <ControlIcon>
      {children}
      {more && <Chevron><Up /></Chevron>}
    </ControlIcon>
    <ControlLabel>{label}</ControlLabel>
  </Control>
);

const Meeting = () => (
  <Capture $y={1194}>
    <MeetHead>
      <HeadSide>
        <Brand>Knox Meeting</Brand>
        <span>MettingTest70님이 개설한 회의 30분 이상 영어 발화</span>
        <Gap $w={6} />
        <Icon w={13} h={13} stroke="#3f82d6"><circle cx="6.500" cy="6.500" r="5.800" /><path d="M6.500 5.500 V9.500 M5.500 9.500 H7.500 M6.500 3 V4.200" /></Icon>
        <Elapsed>진행시간 00:40</Elapsed>
        <Icon w={16} h={14} stroke="#d0d1d3" sw={1.3}><path d="M0 2.500 H6 M0 5.500 H5 M0 8.500 H5" /><rect x="8.500" y=".5" width="5" height="8.500" rx="2.500" fill="#d0d1d3" stroke="none" /><path d="M6.500 6 Q7 11 11 11 Q15 11 15.500 6 M11 11 V14" /></Icon>
      </HeadSide>
      <Icon w={10} h={10} stroke="none"><circle cx="5" cy="5" r="5" fill="#1c3c68" /><circle cx="5" cy="5" r="3" fill="#3c8cf5" /></Icon>
      <FileName>1000.pptx</FileName>
      <Icon w={10} h={6} stroke="#97999b"><path d="M.5 .5 L5 5 L9.500 .5" /></Icon>
      <HeadSide $end>
        <Spot $w={30}><Icon w={14} h={14}><circle cx="7" cy="7" r="6.300" /><path d="M5 5.500 Q5 3.700 7 3.700 Q9 3.700 9 5.300 Q9 6.500 7 7.200 V8.500 M7 9.700 V11" /></Icon></Spot>
        <Spot $w={30}>
          <Icon w={14} h={14}><circle cx="7" cy="7" r="2.200" /><path d="M5.800 .7 H8.200 L8.600 2.400 L10.300 3.300 L12 2.700 L13.200 4.800 L12 6 V8 L13.200 9.200 L12 11.300 L10.300 10.700 L8.600 11.600 L8.200 13.300 H5.800 L5.400 11.600 L3.700 10.700 L2 11.300 L.8 9.200 L2 8 V6 L.8 4.800 L2 2.700 L3.700 3.300 L5.400 2.400Z" /></Icon>
        </Spot>
        <Gap $w={10} />
        <Icon w={1} h={13} stroke="#515355"><path d="M.5 0 V13" /></Icon>
        <Gap $w={10} />
        <Spot $w={30}><Icon w={12} h={12}><path d="M.6 3.500 V.6 H3.500 M.6 .6 L4.500 4.500 M8.500 .6 H11.400 V3.500 M11.400 .6 L7.500 4.500 M.6 8.500 V11.400 H3.500 M.6 11.400 L4.500 7.500 M8.500 11.400 H11.400 V8.500 M11.400 11.400 L7.500 7.500" /></Icon></Spot>
        <Spot $w={30}><Icon w={9} h={6} sw={1.5}><path d="M0 5 H9" /></Icon></Spot>
        <Spot $w={30}><Icon w={11} h={10}><path d="M.6 3 H7 V9.400 H.6Z M3 3 V.6 H10 V7 H7" /></Icon></Spot>
        <Spot $w={31}><Icon w={10} h={10}><path d="M.5 .5 L9.500 9.500 M9.500 .5 L.5 9.500" /></Icon></Spot>
        <Gap $w={10} />
      </HeadSide>
    </MeetHead>
    <Stage>
      <Pager>
        <Gap $w={12} />
        <Icon w={4} h={13} stroke="#4a4b4d"><path d="M.5 0 V13 M3.500 0 V13" /></Icon>
        <Gap $w={17} />
        <Icon w={11} h={9}><path d="M11 4.500 H1 M5 .5 L1 4.500 L5 8.500" /></Icon>
        <Gap $w={12} />
        <b>10</b>
        <span>/ 1000</span>
        <Grow />
        <Icon w={11} h={9}><path d="M0 4.500 H10 M6 .5 L10 4.500 L6 8.500" /></Icon>
        <Gap $w={13} />
        <Icon w={1} h={11} stroke="#606163"><path d="M.5 0 V11" /></Icon>
        <Gap $w={5} />
        <Pen><Icon w={12} h={12} stroke="none" fill="#fff"><path d="M8 1 L11 4 L7 8 L4 8.500 L4.500 5Z M14 -3 H16.500 V-1Z" /><path d="M0 12 L4 8.500" stroke="#888" /></Icon></Pen>
        <Gap $w={5} />
        <Icon w={1} h={11} stroke="#606163"><path d="M.5 0 V11" /></Icon>
        <Gap $w={14} />
        <Icon w={9} h={10}><path d="M.5 .5 L5 5 L.5 9.500 M8.500 0 V10" /></Icon>
        <Gap $w={12} />
      </Pager>
    </Stage>
    <Controls>
      <Gap $w={25} />
      <Action label="마이크 On" w={71} more>
        <Icon w={16} h={21} sw={1.6}><rect x="4.500" y="0" width="7" height="13" rx="3.500" fill="currentColor" stroke="none" /><path d="M1 10 Q1 16 8 16 Q15 16 15 10 M8 16 V21" /></Icon>
      </Action>
      <Action label="카메라 Off" w={71} more>
        <Icon w={21} h={20}><path d="M0 3 H14 V8 L20.500 3.500 V16.500 L14 12 V17.500 H0Z" fill="currentColor" stroke="none" /><path d="M1 0 L20 19.500" stroke="#111" strokeWidth="4" /><path d="M0 0 L20 19.500" stroke="#d8232a" strokeWidth="1.900" /></Icon>
      </Action>
      <Gap $w={299} />
      <Action label="공유 변경"><Icon w={22} h={17} stroke="none"><rect width="22" height="17" rx="1.500" fill="#3f8cf4" /><path d="M11 4 L15 8.500 H12.600 V12.500 H9.400 V8.500 H7Z" fill="#0f1011" /></Icon></Action>
      <Action label="공유 종료"><Icon w={16} h={16} stroke="none"><rect width="16" height="16" rx="1" fill="#ff5328" /></Icon></Action>
      <Action label="녹화"><Icon w={20} h={20}><circle cx="10" cy="10" r="9.400" /><circle cx="10" cy="10" r="5.200" fill="currentColor" stroke="none" /></Icon></Action>
      <Action label="반응하기"><Icon w={19} h={19} stroke="none"><circle cx="9.500" cy="9.500" r="9.300" fill="currentColor" /><circle cx="6.500" cy="7" r="1.400" fill="#111" /><circle cx="12.500" cy="7" r="1.400" fill="#111" /><path d="M5.500 11.500 Q9.500 15.500 13.500 11.500" stroke="#111" strokeWidth="1.500" /></Icon></Action>
      <Action label="Copilot">
        <Icon w={18} h={19} stroke="none">
          <path d="M.3 15 L6 1.500 Q9 -1.500 12 1.500 L15 10 Q11 10.500 10.500 13.500 L9.500 11 L6 17 Q3 19.500 1 17.500 Q0 16.500 .3 15Z" fill="#a4a5a7" />
          <path d="M9 0 Q11 0 12 1.500 L15 10 Q11 10.500 10.500 13.500 L7 4Z" fill="#c2c3c5" />
          <circle cx="14.500" cy="14.800" r="3.200" fill="#a6a7a9" />
        </Icon>
      </Action>
      <Action label="더보기"><Icon w={18} h={4} stroke="none" fill="currentColor"><circle cx="2" cy="2" r="1.700" /><circle cx="9" cy="2" r="1.700" /><circle cx="16" cy="2" r="1.700" /></Icon></Action>
      <Grow />
      <Action label="참석자 영상"><Icon w={20} h={18} stroke="none" fill="currentColor"><path d="M1 0 H19 V2 H1Z M0 3.500 H20 V17.500 H15.500 Q15 12.500 10 12.500 Q5 12.500 4.500 17.500 H0Z" /><circle cx="10" cy="9" r="3" fill="#111" /></Icon></Action>
      <Action label="대화 기록"><Icon w={21} h={18} stroke="none" fill="currentColor"><path d="M1 0 H20 V2 H1Z M0 3.500 H21 V17.500 H0Z" /><path d="M4 7 H17 M4 10.500 H17 M4 14 H12" stroke="#111" strokeWidth="1.300" /></Icon></Action>
      <Action label="참석자"><Icon w={18} h={18} stroke="none" fill="currentColor"><circle cx="9" cy="4.200" r="4.200" /><path d="M0 15 Q1 9.500 9 9.500 Q17 9.500 18 15 Q18 18 16 18 H2 Q0 18 0 15Z" /></Icon></Action>
      <Action label="채팅"><Icon w={20} h={18} stroke="none" fill="currentColor"><path d="M2 0 H18 Q20 0 20 2 V12 Q20 14 18 14 H9 L5 18 V14 H2 Q0 14 0 12 V2 Q0 0 2 0Z" /><circle cx="5.500" cy="7" r="1.200" fill="#111" /><circle cx="10" cy="7" r="1.200" fill="#111" /><circle cx="14.500" cy="7" r="1.200" fill="#111" /></Icon></Action>
      <Gap $w={10} />
      <Leave>
        <Icon w={11} h={10}><path d="M4 .6 H.6 V9.400 H4 M3.500 5 H10 M7.500 2.500 L10.200 5 L7.500 7.500" /></Icon>
        <span>종료</span>
      </Leave>
      <Lock><Icon w={10} h={13}><rect x=".5" y="5.500" width="6.500" height="6.500" fill="currentColor" stroke="none" /><path d="M5.500 5.500 V3 Q5.500 .8 7.500 .8 Q9.500 .8 9.500 3" /><rect x="3" y="7.500" width="1.600" height="2.500" fill="#1a1b1d" stroke="none" /></Icon></Lock>
    </Controls>
    <Taskbar ime="A" time="9:28">
      <span>15°C&nbsp; 맑음</span>
    </Taskbar>
  </Capture>
);

/* ---------- annotations over the sheet ---------- */

const ArrowShape = styled.svg`
  position: absolute;
  left: 1428px;
  top: 1013px;
  width: 166px;
  height: 170px;
`;

const Callout = styled.div`
  position: absolute;
  left: 820px;
  top: 1417px;
  width: 324px;
  height: 142px;
  border: 2px solid #41719c;
  border-radius: 24px;
  background: #5b9bd5;
  color: #fff;
  text-align: center;
  padding-right: 0;
  font-size: 40px;
  line-height: 45px;
  letter-spacing: 1.2px;
  word-spacing: 1px;
  font-weight: 350;
`;

export default function App() {
  return (
    <Page>
      <Global />
      <Report />
      <PowerPoint />
      <Meeting />
      <ArrowShape viewBox="0 0 166 170">
        <path d="M43.500 3 H122 V85.500 H162 L82.500 165 L3 85.500 H43.500Z" fill="#5b9bd5" stroke="#41719c" strokeWidth="1.600" />
      </ArrowShape>
      <Callout>
        해당 문서 공유
        <br />
        시 검은 화면
        <br />
        출력됨
      </Callout>
    </Page>
  );
}
